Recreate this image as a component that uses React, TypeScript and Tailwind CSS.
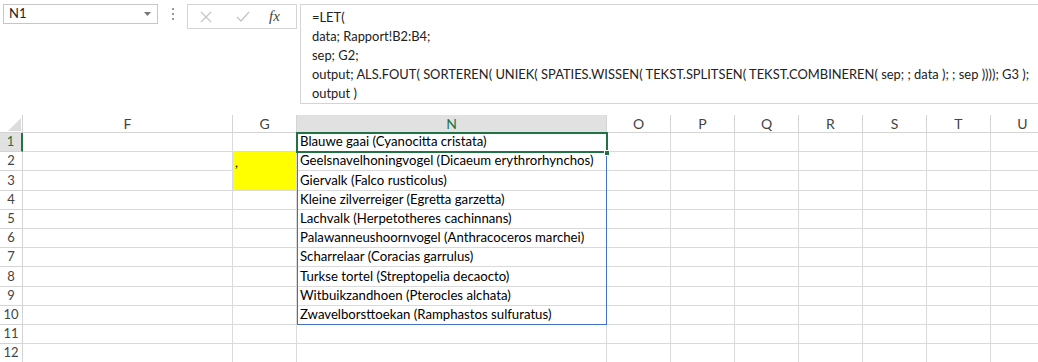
import React from 'react';

const birds = [
    'Blauwe gaai (Cyanocitta cristata)',
    'Geelsnavelhoningvogel (Dicaeum erythrorhynchos)',
    'Giervalk (Falco rusticolus)',
    'Kleine zilverreiger (Egretta garzetta)',
    'Lachvalk (Herpetotheres cachinnans)',
    'Palawanneushoornvogel (Anthracoceros marchei)',
    'Scharrelaar (Coracias garrulus)',
    'Turkse tortel (Streptopelia decaocto)',
    'Witbuikzandhoen (Pterocles alchata)',
    'Zwavelborsttoekan (Ramphastos sulfuratus)',
];

const rowHeights = ['h-[19px]', 'h-[19px]', 'h-[20px]', 'h-[19px]', 'h-[19px]', 'h-[19px]', 'h-[19px]', 'h-[20px]', 'h-[19px]', 'h-[19px]', 'h-[19px]', 'h-[19px]'];
const extraCols = ['O', 'P', 'Q', 'R', 'S', 'T', 'U'];

const formula = [
    '=LET(',
    'data; Rapport!B2:B4;',
    'sep; G2;',
    'output; ALS.FOUT( SORTEREN( UNIEK( SPATIES.WISSEN( TEKST.SPLITSEN( TEKST.COMBINEREN( sep; ; data ); ; sep )))); G3 );',
    'output )',
];

const FormulaBar: React.FC = () => (
    <div className="flex items-start pt-[4px] h-[115px]">
        <div className="ml-[3px] w-[155px] h-[20px] border border-[#c6c6c6] flex items-center justify-between pl-[5px] pr-[6px] text-[13px] text-[#222]">
            <span>N1</span>
            <svg width="7" height="4" viewBox="0 0 7 4"><path d="M0 0h7L3.5 4z" fill="#777" /></svg>
        </div>
        <div className="ml-[14px] mt-[4px] flex flex-col gap-[3px]">
            <span className="w-[2px] h-[2px] bg-[#999]" />
            <span className="w-[2px] h-[2px] bg-[#999]" />
            <span className="w-[2px] h-[2px] bg-[#999]" />
        </div>
        <div className="ml-[13px] w-[110px] h-[25px] border border-[#d4d4d4] flex items-center">
            <svg className="ml-[12px]" width="12" height="12" viewBox="0 0 12 12">
                <path d="M1 1l10 10M11 1L1 11" stroke="#c4c4c4" strokeWidth="1.2" fill="none" />
            </svg>
            <svg className="ml-[24px]" width="14" height="11" viewBox="0 0 14 11">
                <path d="M1 6l4 4 8-9" stroke="#c4c4c4" strokeWidth="1.3" fill="none" />
            </svg>
            <span className="ml-[19px] font-[family-name:'Liberation_Serif',serif] italic text-[15px] text-[#444]">fx</span>
        </div>
        <div className="ml-[3px] flex-1 h-[100px] border-t border-l border-b border-[#d4d4d4] pl-[11px] pt-[3px] text-[12.9px] leading-[19px] text-[#222] whitespace-nowrap overflow-hidden">
            {formula.map((line, i) => (
                <div key={i}>{line}</div>
            ))}
        </div>
    </div>
);

const Sheet: React.FC = () => (
    <div className="relative">
        <div className="grid grid-cols-[23px_210px_64px_310px_64px_64px_64px_64px_64px_64px_64px] w-max">
            <div className="h-[18px] border-b border-r border-[#d4d4d4] flex items-end justify-end pr-[1px] pb-[1px]">
                <svg width="13" height="13" viewBox="0 0 13 13"><path d="M13 0v13H0z" fill="#dcdcdc" /></svg>
            </div>
            <div className="h-[18px] border-b border-r border-[#d4d4d4] flex items-center justify-center text-[14px] text-[#444]">F</div>
            <div className="h-[18px] border-b border-r border-[#d4d4d4] flex items-center justify-center text-[14px] text-[#444]">G</div>
            <div className="h-[18px] border-b border-r border-[#d4d4d4] bg-[#e1e1e1] flex items-center justify-center text-[14px] text-[#217346]">N</div>
            {extraCols.map(c => (
                <div key={c} className="h-[18px] border-b border-r border-[#d4d4d4] flex items-center justify-center text-[14px] text-[#444]">{c}</div>
            ))}

            {rowHeights.map((h, i) => {
                const row = i + 1;
                const yellow = row === 2 || row === 3;
                return (
                    <React.Fragment key={row}>
                        <div className={`${h} border-b flex items-center justify-center ${row === 1 ? 'bg-[#e1e1e1] text-[#217346] border-r-2 border-r-[#217346] border-b-[#d4d4d4]' : 'border-r border-[#d4d4d4] text-[#444]'}`}>
                            {row}
                        </div>
                        <div className={`${h} border-b border-r border-[#dadada]`} />
                        <div className={`${h} border-r border-[#dadada] ${yellow ? 'bg-[#ffff00]' : ''} ${row === 2 ? 'border-b border-b-[#ffff00]' : 'border-b'} flex items-end pl-[2px] pb-[1px] leading-[14px]`}>
                            {row === 2 ? ',' : ''}
                        </div>
                        <div className={`${h} border-b border-r border-[#dadada] flex items-center pl-[3px] text-[13.2px] text-black`}>
                            {birds[i] ?? ''}
                        </div>
                        {extraCols.map(c => (
                            <div key={c} className={`${h} border-b border-r border-[#dadada]`} />
                        ))}
                    </React.Fragment>
                );
            })}
        </div>

        {/* spill range outline */}
        <div className="absolute left-[297px] top-[18px] w-[310px] h-[192px] border border-[#4472c4] pointer-events-none" />
        {/* active cell */}
        <div className="absolute left-[296px] top-[17px] w-[312px] h-[21px] border-2 border-[#217346] pointer-events-none" />
        <div className="absolute left-[604px] top-[35px] w-[6px] h-[6px] bg-[#217346] border border-white" />
    </div>
);

const App: React.FC = () => {
    return (
        <div className="w-[1038px] h-[362px] overflow-hidden bg-white font-[family-name:Lato,sans-serif] text-[13px]">
            <FormulaBar />
            <Sheet />
        </div>
    );
};

export default App;
